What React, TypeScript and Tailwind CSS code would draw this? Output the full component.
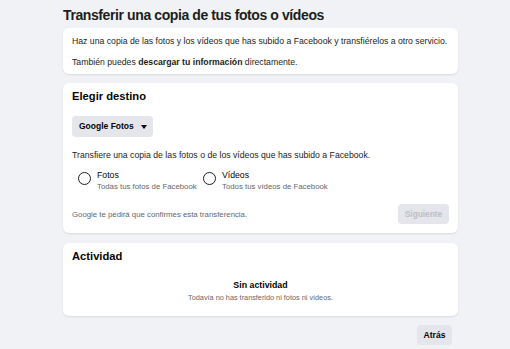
import React from "react";

function Radio({ title, sub, className }: { title: string; sub: string; className?: string }) {
  return (
    <div className={"flex items-start gap-[6px] " + (className ?? "")}>
      <div className="mt-[2px] w-[13px] h-[13px] shrink-0 rounded-full border-[1.6px] border-[#1c1e21]" />
      <div className="flex flex-col">
        <span className="text-[8.7px] leading-[11px] text-[#050505]">{title}</span>
        <span className="text-[7.8px] leading-[11px] text-[#65676b] whitespace-nowrap">{sub}</span>
      </div>
    </div>
  );
}

export default function App() {
  return (
    <div
      className="w-[510px] h-[349px] bg-[#f0f2f5] overflow-hidden"
      style={{ fontFamily: '"Liberation Sans", Arial, sans-serif' }}
    >
      <div className="ml-[63px] w-[395px] flex flex-col">
        <h1 className="mt-[4px] mb-[2px] h-[22px] text-[14px] tracking-[-0.4px] leading-[22px] font-bold text-[#1c1e21] whitespace-nowrap">
          Transferir una copia de tus fotos o vídeos
        </h1>
        <div className="bg-white rounded-[6px] shadow-[0_1px_2px_rgba(0,0,0,0.1)] px-[9px] pt-[8px] pb-[6px] text-[8.7px] leading-[11px] text-[#1c1e21]">
          <p className="whitespace-nowrap">
            Haz una copia de las fotos y los vídeos que has subido a Facebook y transfiérelos a otro servicio.
          </p>
          <p className="mt-[10px] whitespace-nowrap">
            También puedes <span className="font-bold">descargar tu información</span> directamente.
          </p>
        </div>

        <div className="mt-[9px] bg-white rounded-[6px] shadow-[0_1px_2px_rgba(0,0,0,0.1)] px-[9px] pt-[6px] pb-[9px] h-[150px] flex flex-col">
          <h2 className="text-[11.2px] leading-[14px] font-bold text-[#050505]">Elegir destino</h2>
          <div className="mt-[13px]">
            <button className="h-[21px] w-[81px] pl-[7px] pr-[6px] rounded-[4px] bg-[#e4e6eb] flex items-center justify-between text-[8.5px] font-bold text-[#050505]">
              Google Fotos
              <svg width="6" height="4" viewBox="0 0 6 4">
                <path d="M0 0 L6 0 L3 4 Z" fill="#050505" />
              </svg>
            </button>
          </div>
          <p className="mt-[13px] text-[8.7px] leading-[11px] text-[#1c1e21] whitespace-nowrap">
            Transfiere una copia de las fotos o de los vídeos que has subido a Facebook.
          </p>
          <div className="mt-[9px] ml-[6px] flex">
            <Radio title="Fotos" sub="Todas tus fotos de Facebook" className="w-[125px]" />
            <Radio title="Vídeos" sub="Todos tus vídeos de Facebook" />
          </div>
          <div className="mt-auto flex items-center justify-between">
            <span className="text-[7.8px] leading-[12px] pt-[1px] text-[#65676b]">Google te pedirá que confirmes esta transferencia.</span>
            <button className="h-[20px] w-[51px] rounded-[4px] bg-[#e4e6eb] text-[8.3px] font-bold text-[#bcc0c4]">
              Siguiente
            </button>
          </div>
        </div>

        <div className="mt-[10px] bg-white rounded-[6px] shadow-[0_1px_2px_rgba(0,0,0,0.1)] px-[9px] pt-[6px] h-[73px] flex flex-col">
          <h2 className="text-[11.2px] leading-[14px] font-bold text-[#050505]">Actividad</h2>
          <div className="mt-[17px] flex flex-col items-center">
            <span className="text-[8.8px] leading-[11px] font-bold text-[#050505]">Sin actividad</span>
            <span className="mt-[1px] text-[7.3px] leading-[12px] text-[#65676b]">Todavía no has transferido ni fotos ni vídeos.</span>
          </div>
        </div>

        <div className="mt-[9px] flex justify-end pr-[6px]">
          <button className="h-[20px] w-[35px] rounded-[4px] bg-[#e4e6eb] text-[8.6px] font-bold text-[#050505]">
            Atrás
          </button>
        </div>
      </div>
    </div>
  );
}
